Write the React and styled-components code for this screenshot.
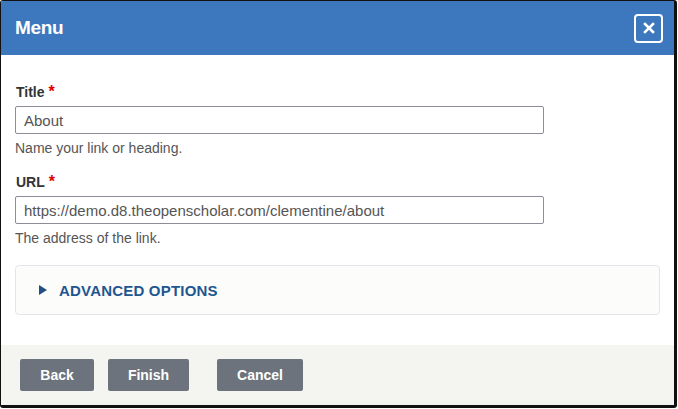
import React from "react";
import styled, { createGlobalStyle } from "styled-components";

const GlobalStyle = createGlobalStyle`
  html, body {
    margin: 0;
    padding: 0;
    background: #fff;
  }
  body {
    font-family: "Liberation Sans", Arial, sans-serif;
  }
`;

const Dialog = styled.div`
  width: 673px;
  height: 404px;
  border: 1px solid #111;
  border-right-width: 3px;
  border-bottom-width: 3px;
  border-radius: 3px;
  overflow: hidden;
  display: flex;
  flex-direction: column;
  background: #fff;
`;

const Header = styled.div`
  height: 54px;
  flex: none;
  background: #3d77bd;
  display: flex;
  align-items: center;
  justify-content: space-between;
  padding: 0 11px 0 14px;
`;

const HeaderTitle = styled.h1`
  margin: 0;
  color: #fff;
  font-size: 19px;
  font-weight: bold;
  letter-spacing: -0.3px;
`;

const CloseButton = styled.button`
  width: 29px;
  height: 29px;
  box-sizing: border-box;
  border: 2px solid #fff;
  border-radius: 4px;
  background: transparent;
  padding: 0;
  display: flex;
  align-items: center;
  justify-content: center;
  cursor: pointer;
`;

const Body = styled.div`
  flex: 1;
  padding: 28px 14px 0 14px;
`;

const Field = styled.div`
  margin-bottom: 17px;
`;

const Label = styled.label`
  display: block;
  font-size: 14px;
  font-weight: bold;
  color: #333;
  margin-bottom: 5px;
  padding-left: 1px;
`;

const Required = styled.span`
  color: #e00000;
  font-size: 16px;
  margin-left: 4px;
`;

const Input = styled.input`
  display: block;
  width: 529px;
  height: 28px;
  box-sizing: border-box;
  border: 1px solid #8d8d99;
  border-radius: 2px;
  padding: 0 8px;
  font-family: "Liberation Sans", Arial, sans-serif;
  font-size: 15px;
  color: #555;
  outline: none;
`;

const Help = styled.div`
  font-size: 14px;
  color: #555;
  margin-top: 6px;
`;

const Details = styled.div`
  margin-top: 19px;
  width: 645px;
  height: 50px;
  box-sizing: border-box;
  border: 1px solid #e3e5ee;
  border-radius: 4px;
  background: #fcfcfa;
  display: flex;
  align-items: center;
  padding-left: 23px;
  gap: 12px;
`;

const Triangle = styled.span`
  width: 0;
  height: 0;
  border-top: 5px solid transparent;
  border-bottom: 5px solid transparent;
  border-left: 8px solid #1f4f85;
`;

const DetailsTitle = styled.span`
  font-size: 15px;
  font-weight: bold;
  color: #1f5691;
  letter-spacing: 0.2px;
`;

const Footer = styled.div`
  height: 60px;
  flex: none;
  background: #f4f4f0;
  display: flex;
  align-items: center;
  padding-left: 19px;
`;

const Button = styled.button`
  height: 32px;
  width: ${(p) => p.$w}px;
  margin-left: ${(p) => p.$gap || 0}px;
  border: none;
  border-radius: 2px;
  background: #6c737c;
  color: #fff;
  font-family: "Liberation Sans", Arial, sans-serif;
  font-size: 14px;
  font-weight: bold;
  cursor: pointer;
`;

export default function App() {
  return (
    <>
      <GlobalStyle />
      <Dialog>
        <Header>
          <HeaderTitle>Menu</HeaderTitle>
          <CloseButton aria-label="Close">
            <svg width="12" height="12" viewBox="0 0 12 12">
              <path
                d="M2 2 L10 10 M10 2 L2 10"
                stroke="#fff"
                strokeWidth="2.6"
                strokeLinecap="square"
              />
            </svg>
          </CloseButton>
        </Header>
        <Body>
          <Field>
            <Label>
              Title<Required>*</Required>
            </Label>
            <Input defaultValue="About" />
            <Help>Name your link or heading.</Help>
          </Field>
          <Field>
            <Label>
              URL<Required>*</Required>
            </Label>
            <Input defaultValue="https://demo.d8.theopenscholar.com/clementine/about" />
            <Help>The address of the link.</Help>
          </Field>
          <Details>
            <Triangle />
            <DetailsTitle>ADVANCED OPTIONS</DetailsTitle>
          </Details>
        </Body>
        <Footer>
          <Button $w={74}>Back</Button>
          <Button $w={81} $gap={14}>Finish</Button>
          <Button $w={86} $gap={28}>Cancel</Button>
        </Footer>
      </Dialog>
    </>
  );
}
